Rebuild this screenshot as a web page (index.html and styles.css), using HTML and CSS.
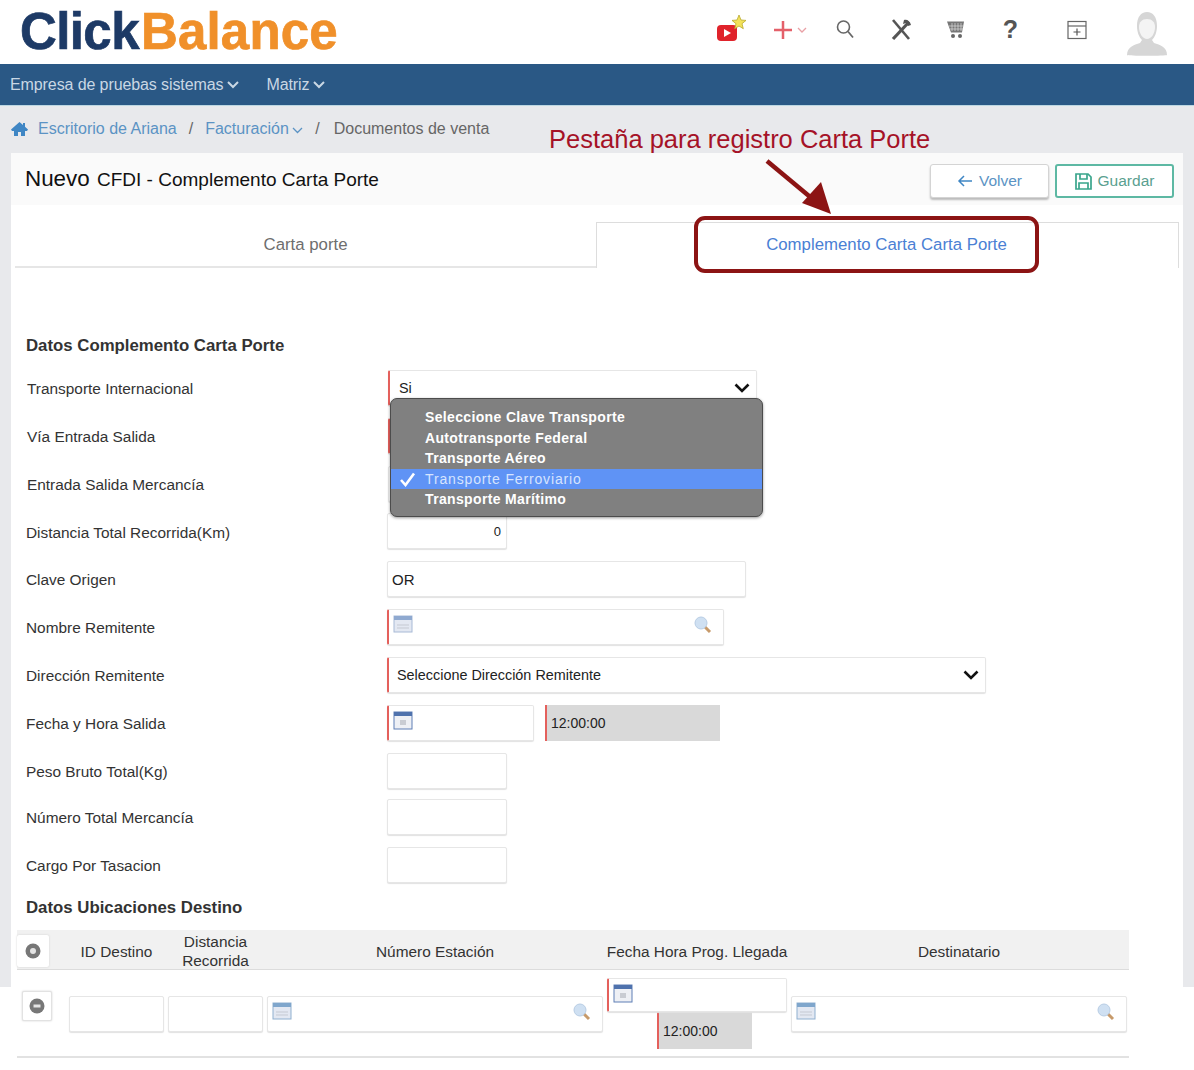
FILE: index.html
```html
<!DOCTYPE html>
<html lang="es">
<head>
    <meta charset="UTF-8">
    <meta name="viewport" content="width=device-width, initial-scale=1.0">
    <title>Complemento Carta Porte</title>
    <link rel="stylesheet" href="styles.css">
</head>
<body>
    <header class="topbar">
        <div class="logo"><span class="logo-click">Click</span><span class="logo-balance">Balance</span></div>
        <div class="top-icons">
            <svg class="ic-video" width="31" height="30" viewBox="0 0 31 30"><rect x="0" y="11" width="20" height="16" rx="4" fill="#e0232b"/><path d="M7 15l7 4-7 4z" fill="#fff"/><path d="M22 1l2 5 5 .4-4 3.300 1.300 5-4.300-2.700-4.300 2.700 1.300-5-4-3.300 5-.4z" fill="#f3e25a" stroke="#b9a92c" stroke-width=".8"/></svg>
            <svg class="ic-plus" width="36" height="20" viewBox="0 0 36 20"><path d="M10 1v18M1 10h18" stroke="#e4606a" stroke-width="2.500"/><path d="M25 8l4 4 4-4" fill="none" stroke="#e9a0a5" stroke-width="1.300"/></svg>
            <svg class="ic-search" width="20" height="20" viewBox="0 0 20 20"><circle cx="8.500" cy="8" r="6" fill="none" stroke="#666" stroke-width="1.600"/><path d="M13 12.500l5 6" stroke="#666" stroke-width="1.800"/></svg>
            <svg class="ic-tools" width="22" height="22" viewBox="0 0 22 22"><path d="M3 1l16 19" stroke="#555" stroke-width="2.600"/><path d="M19 3L3 20" stroke="#555" stroke-width="3.200"/><path d="M14 1c3-1 6 1 7 5l-3 1-2-3-3 1z" fill="#555"/></svg>
            <svg class="ic-cart" width="20" height="20" viewBox="0 0 20 20"><path d="M1 1.500h17l-2 11H5z" fill="#777"/><path d="M6 3v8M9 3v8M12 3v8M15 3v8M3 6h15M4 9h13" stroke="#ddd" stroke-width=".7"/><circle cx="7" cy="16" r="2" fill="#666"/><circle cx="14" cy="16" r="2" fill="#666"/></svg>
            <span class="ic-help">?</span>
            <svg class="ic-window" width="20" height="20" viewBox="0 0 20 20"><rect x="1" y="1.500" width="18" height="17" fill="#fff" stroke="#666" stroke-width="1.200"/><path d="M1 6h18" stroke="#666" stroke-width="1.200"/><path d="M10 8.500v7M6.500 12h7" stroke="#555" stroke-width="1.200"/></svg>
            <svg class="ic-user" width="40" height="46" viewBox="0 0 40 46"><path d="M0 44c0-8 7-10 13-12l2-3c-3-3-5-8-5-14C10 6 14 1 20 1s10 5 10 14c0 6-2 11-5 14l2 3c6 2 13 4 13 12 0 1-40 1-40 0z" fill="#d6d6d6"/><path d="M12 16c0-5 3-8 8-8s8 3 8 8c0 7-4 12-8 12s-8-5-8-12z" fill="#f4f4f4"/></svg>
        </div>
    </header>

    <nav class="navbar">
        <span class="nav-item">Empresa de pruebas sistemas <svg class="chev" width="12" height="8" viewBox="0 0 12 8"><path d="M1 1l5 5 5-5" fill="none" stroke="currentColor" stroke-width="2"/></svg></span>
        <span class="nav-item">Matriz <svg class="chev" width="12" height="8" viewBox="0 0 12 8"><path d="M1 1l5 5 5-5" fill="none" stroke="currentColor" stroke-width="2"/></svg></span>
    </nav>

    <main class="content">
        <div class="crumbs">
            <svg class="ic-home" width="17" height="14" viewBox="0 0 17 14"><path d="M8.500 0L0 7.500 1 9h2v5h4v-4h3v4h4V9h2l1-1.500-3-2.700V1h-2v2z" fill="#3f86c4"/></svg>
            <a class="crumb-link">Escritorio de Ariana</a>
            <span class="crumb-sep">/</span>
            <a class="crumb-link">Facturación <svg class="chev-small" width="11" height="7" viewBox="0 0 11 7"><path d="M1 1l4.500 4.500L10 1" fill="none" stroke="currentColor" stroke-width="1.300"/></svg></a>
            <span class="crumb-sep">/</span>
            <span class="crumb-current">Documentos de venta</span>
        </div>

        <section class="panel">
            <div class="title-bar">
                <h1 class="title"><span class="title-big">Nuevo</span> CFDI - Complemento Carta Porte</h1>
                <div class="actions">
                    <button class="btn btn-back"><svg width="16" height="12" viewBox="0 0 16 12"><path d="M7 1L2 6l5 5M2 6h13" fill="none" stroke="#3f86c4" stroke-width="1.500"/></svg>Volver</button>
                    <button class="btn btn-save"><svg width="17" height="17" viewBox="0 0 17 17"><path d="M1 1h12l3 3v12H1z" fill="none" stroke="#3aa58c" stroke-width="1.700"/><path d="M5 1v5h7V1M4 16v-6h9v6" fill="none" stroke="#3aa58c" stroke-width="1.700"/></svg>Guardar</button>
                </div>
            </div>

            <div class="tabs">
                <div class="tab">Carta porte</div>
                <div class="tab tab-active">Complemento Carta Carta Porte</div>
            </div>

            <h2 class="section-title section-first">Datos Complemento Carta Porte</h2>

            <div class="form">
                <div class="row row-select">
                    <label class="row-label">Transporte Internacional</label>
                    <div class="field field-req w370 select-field">Si <svg class="sel-arrow" width="16" height="10" viewBox="0 0 16 10"><path d="M1.500 1.500L8 8l6.500-6.500" fill="none" stroke="#111" stroke-width="2.600"/></svg></div>
                    <ul class="menu">
                        <li>Seleccione Clave Transporte</li>
                        <li>Autotransporte Federal</li>
                        <li>Transporte Aéreo</li>
                        <li class="menu-on"><svg class="menu-check" width="17" height="15" viewBox="0 0 17 15"><path d="M2 8l4.500 5L15 1.500" fill="none" stroke="#fff" stroke-width="2.600"/></svg>Transporte Ferroviario</li>
                        <li>Transporte Marítimo</li>
                    </ul>
                </div>
                <div class="row row-select">
                    <label class="row-label">Vía Entrada Salida</label>
                    <div class="field field-req w370"></div>
                </div>
                <div class="row row-select">
                    <label class="row-label">Entrada Salida Mercancía</label>
                    <div class="field w370"></div>
                </div>
                <div class="row row-after-select">
                    <label class="row-label">Distancia Total Recorrida(Km)</label>
                    <div class="field w120 field-num">0</div>
                </div>
                <div class="row">
                    <label class="row-label">Clave Origen</label>
                    <div class="field w359">OR</div>
                </div>
                <div class="row">
                    <label class="row-label">Nombre Remitente</label>
                    <div class="field field-req w337 lookup">
                        <svg class="cal" width="20" height="18" viewBox="0 0 20 18"><rect x="1" y="1" width="18" height="16" fill="#e3e8f2" stroke="#a8bad6"/><rect x="1" y="1" width="18" height="4" fill="#8fa9d0"/><path d="M4 10h12M4 13h12" stroke="#c5c9d2"/></svg>
                        <svg class="lens" width="20" height="20" viewBox="0 0 20 20"><path d="M11 11l6 6" stroke="#c79a6a" stroke-width="3"/><circle cx="8" cy="8" r="6" fill="#cfe0f2" stroke="#b8cde4"/></svg>
                    </div>
                </div>
                <div class="row">
                    <label class="row-label">Dirección Remitente</label>
                    <div class="field field-req w599 select-field sel-pad">Seleccione Dirección Remitente <svg class="sel-arrow" width="16" height="10" viewBox="0 0 16 10"><path d="M1.500 1.500L8 8l6.500-6.500" fill="none" stroke="#111" stroke-width="2.600"/></svg></div>
                </div>
                <div class="row">
                    <label class="row-label">Fecha y Hora Salida</label>
                    <div class="field field-req w147">
                        <svg class="cal" width="20" height="19" viewBox="0 0 20 19"><rect x="1" y="1" width="18" height="17" fill="#eef0f5" stroke="#5f7fb5"/><rect x="1" y="1" width="18" height="4" fill="#4f72ad"/><rect x="7" y="9" width="6" height="5" fill="#c9ccd3"/></svg>
                    </div>
                    <div class="field-time w175">12:00:00</div>
                </div>
                <div class="row">
                    <label class="row-label">Peso Bruto Total(Kg)</label>
                    <div class="field w120"></div>
                </div>
                <div class="row row-short">
                    <label class="row-label">Número Total Mercancía</label>
                    <div class="field w120"></div>
                </div>
                <div class="row">
                    <label class="row-label">Cargo Por Tasacion</label>
                    <div class="field w120"></div>
                </div>
            </div>

            <h2 class="section-title section-second">Datos Ubicaciones Destino</h2>

            <div class="grid-table">
                <div class="grid-head">
                    <div class="cell-btn"><span class="round-btn"><svg width="16" height="16" viewBox="0 0 16 16"><circle cx="8" cy="8" r="7.500" fill="#777"/><circle cx="8" cy="8" r="3" fill="#e4e4e4"/></svg></span></div>
                    <div>ID Destino</div>
                    <div>Distancia Recorrida</div>
                    <div>Número Estación</div>
                    <div>Fecha Hora Prog. Llegada</div>
                    <div>Destinatario</div>
                </div>
                <div class="grid-row">
                    <div class="cell-btn"><span class="round-btn round-minus"><svg width="16" height="16" viewBox="0 0 16 16"><circle cx="8" cy="8" r="7.500" fill="#777"/><rect x="4.500" y="6.500" width="7" height="3" fill="#e4e4e4"/></svg></span></div>
                    <div class="cell-plain"><div class="field"></div></div>
                    <div class="cell-plain"><div class="field"></div></div>
                    <div class="cell-plain"><div class="field lookup">
                        <svg class="cal" width="20" height="18" viewBox="0 0 20 18"><rect x="1" y="1" width="18" height="16" fill="#e3e8f2" stroke="#8fb0d0"/><rect x="1" y="1" width="18" height="4" fill="#7fa6cc"/><path d="M4 10h12M4 13h12" stroke="#c5c9d2"/></svg>
                        <svg class="lens" width="20" height="20" viewBox="0 0 20 20"><path d="M11 11l6 6" stroke="#c79a6a" stroke-width="3"/><circle cx="8" cy="8" r="6" fill="#cfe0f2" stroke="#b8cde4"/></svg>
                    </div></div>
                    <div class="cell-date">
                        <div class="field field-req field-date">
                            <svg class="cal" width="20" height="19" viewBox="0 0 20 19"><rect x="1" y="1" width="18" height="17" fill="#eef0f5" stroke="#5f7fb5"/><rect x="1" y="1" width="18" height="4" fill="#4f72ad"/><rect x="7" y="9" width="6" height="5" fill="#c9ccd3"/></svg>
                        </div>
                        <div class="field-time time-small">12:00:00</div>
                    </div>
                    <div class="cell-plain"><div class="field lookup">
                        <svg class="cal" width="20" height="18" viewBox="0 0 20 18"><rect x="1" y="1" width="18" height="16" fill="#e3e8f2" stroke="#8fb0d0"/><rect x="1" y="1" width="18" height="4" fill="#7fa6cc"/><path d="M4 10h12M4 13h12" stroke="#c5c9d2"/></svg>
                        <svg class="lens" width="20" height="20" viewBox="0 0 20 20"><path d="M11 11l6 6" stroke="#c79a6a" stroke-width="3"/><circle cx="8" cy="8" r="6" fill="#cfe0f2" stroke="#b8cde4"/></svg>
                    </div></div>
                </div>
            </div>
        </section>
    </main>

    <!-- anotaciones sobre la captura -->
    <div class="note-text">Pestaña para registro Carta Porte</div>
    <svg class="note-arrow" width="70" height="58" viewBox="0 0 70 58"><path d="M2 2l54 45" stroke="#8c1414" stroke-width="4.500"/><path d="M66 55L37 44l19-21z" fill="#8c1414"/></svg>
    <div class="note-box"></div>
</body>
</html>
```

FILE: styles.css
```css
*{
    box-sizing: border-box;
}
body{
    margin: 0;
    height: 1070px;
    overflow: hidden;
    background: #fff;
    font-family: "Liberation Sans", Arial, sans-serif;
    font-size: 14px;
    color: #333;
    position: relative;
}

/* top bar */
.topbar{
    height: 64px;
    display: flex;
    justify-content: space-between;
    align-items: center;
    padding-left: 20px;
}
.logo{
    font-size: 51px;
    font-weight: bold;
    letter-spacing: -.6px;
    line-height: 1;
    margin-top: -2px;
    -webkit-text-stroke: .7px;
}
.logo-click{
    color: #1d3a66;
    margin-right: 2px;
}
.logo-balance{
    color: #f0902a;
    letter-spacing: .2px;
}
.top-icons{
    display: flex;
    align-items: center;
    height: 64px;
    padding-right: 27px;
}
.ic-video{
    margin-right: 25px;
    margin-top: -6px;
}
.ic-plus{
    margin-right: 26px;
    margin-top: -4px;
}
.ic-search{
    margin-right: 35px;
    margin-top: -6px;
}
.ic-tools{
    margin-right: 34px;
    margin-top: -4px;
}
.ic-cart{
    margin-right: 37px;
    margin-top: -4px;
}
.ic-help{
    font-size: 25px;
    font-weight: bold;
    color: #555;
    margin-right: 49px;
    margin-top: -6px;
}
.ic-window{
    margin-right: 40px;
    margin-top: -4px;
}
.ic-user{
    margin-top: 4px;
    margin-bottom: 0;
}

/* nav */
.navbar{
    height: 42px;
    background: #2a5885;
    border-bottom: 1px solid #bcd7e2;
    color: #c9d7e4;
    display: flex;
    align-items: center;
    gap: 27px;
    padding-left: 10px;
    font-size: 16px;
}
.nav-item{
    display: flex;
    align-items: center;
    gap: 4px;
    letter-spacing: -.1px;
}

/* contenido */
.content{
    height: 881px;
    background: #e8e9ec;
    padding: 0 11px;
}
.crumbs{
    height: 47px;
    display: flex;
    align-items: center;
    gap: 12px;
    padding-bottom: 2px;
    font-size: 16px;
    color: #666;
}
.ic-home{
    margin-right: -2px;
}
.crumb-link{
    color: #5b93c4;
}
.crumb-current{
    color: #666;
    margin-left: 2px;
}
.chev-small{
    margin-left: -1px;
}
.panel{
    width: 1172px;
    height: 917px;
    background: #fff;
}
.title-bar{
    height: 52px;
    background: #fafafa;
    display: flex;
    justify-content: space-between;
    align-items: center;
    padding: 0 9px 0 14px;
}
.title{
    margin: 0;
    font-size: 19px;
    font-weight: normal;
    color: #111;
}
.title-big{
    font-size: 22.400px;
    margin-right: 2px;
}
.actions{
    display: flex;
    gap: 6px;
    margin-top: 4px;
}
.btn{
    height: 34px;
    width: 119px;
    display: flex;
    justify-content: center;
    align-items: center;
    gap: 6px;
    background: #fff;
    border-radius: 3px;
    font-family: inherit;
    font-size: 15.500px;
    padding: 0;
}
.btn-back{
    border: 1px solid #d4d4d4;
    box-shadow: 0 2px 2px #bbb;
    color: #5b93c4;
}
.btn-save{
    border: 2px solid #5db8a3;
    color: #5a9f90;
    width: 119px;
}
.tabs{
    display: flex;
    height: 46px;
    margin: 17px 4px 0;
    text-align: center;
    font-size: 16.800px;
    line-height: 46px;
    color: #6e6e6e;
}
.tab{
    width: 581px;
    border-bottom: 2px solid #e6e6e6;
}
.tab-active{
    width: 583px;
    border: 1px solid #ddd;
    border-bottom: 0;
    color: #4a80d4;
    line-height: 44px;
    padding-right: 2px;
}
.section-title{
    margin: 0 0 0 15px;
    font-size: 16.800px;
    font-weight: bold;
    color: #333;
    line-height: 20px;
}
.section-first{
    padding-top: 68px;
    height: 87px;
}

/* formulario */
.form{
    padding: 0 0 0 15px;
    margin-top: 15px;
}
.row{
    display: flex;
    align-items: center;
    gap: 11px;
    height: 36px;
    margin-bottom: 12px;
    position: relative;
}
.row-short{
    margin-top: -2px;
}
.row-select{
    padding-left: 1px;
}
.row-after-select{
    margin-top: -1px;
}
.row-label{
    width: 350px;
    flex: none;
    padding-top: 1px;
    font-size: 15.400px;
}
.row-after-select .row-label{
    padding-top: 3px;
}
.field{
    height: 36px;
    border: 1px solid #e6e6e6;
    border-radius: 2px;
    background: #fff;
    display: flex;
    align-items: center;
    padding: 0 4px;
    font-size: 15px;
    color: #222;
    position: relative;
    box-shadow: 0 1px 1px #e2e2e2;
}
.field-req{
    border-left: 2px solid #e4605c;
}
.w120{ width: 120px; }
.w147{ width: 147px; }
.w175{ width: 175px; }
.w337{ width: 337px; }
.w359{ width: 359px; }
.w370{ width: 369px; }
.w599{ width: 599px; }
.field-num{
    justify-content: flex-end;
    padding-right: 5px;
    font-size: 13px;
}
.select-field{
    padding-left: 9px;
    font-size: 14.400px;
}
.sel-pad{
    padding-left: 8px;
}
.sel-arrow{
    position: absolute;
    right: 6px;
    top: 12px;
}
.field-time{
    height: 36px;
    background: #d9d9d9;
    border-left: 2px solid #e4605c;
    display: flex;
    align-items: center;
    padding-left: 4px;
    margin-left: 0;
    font-size: 14px;
    color: #222;
}
.cal{
    position: absolute;
    left: 4px;
    top: 5px;
}
.lens{
    position: absolute;
    right: 10px;
    top: 5px;
}

/* menu del select */
.menu{
    position: absolute;
    left: 364px;
    top: 28px;
    z-index: 5;
    width: 373px;
    height: 119px;
    margin: 0;
    padding: 8px 0 0;
    list-style: none;
    background: #808080;
    border: 1px solid #4c4c4c;
    border-radius: 7px;
    box-shadow: 0 1px 3px rgba(0,0,0,.4);
    color: #fff;
    font-size: 14px;
    font-weight: bold;
    letter-spacing: .35px;
}
.menu li{
    height: 20.600px;
    line-height: 20px;
    padding-left: 34px;
    position: relative;
}
.menu .menu-on{
    background: #5f93f5;
    color: #d6e4ff;
    font-weight: normal;
    letter-spacing: .85px;
}
.menu-check{
    position: absolute;
    left: 8px;
    top: 3px;
}

/* tabla destinos */
.section-second{
    margin-top: 15px;
}
.grid-table{
    margin: 12px 0 0 6px;
    width: 1112px;
}
.grid-head,
.grid-row{
    display: grid;
    grid-template-columns: 50px 99px 99px 340px 184px 340px;
}
.grid-head{
    height: 40px;
    padding-top: 2px;
    background: #f1f1f1;
    border-bottom: 1px solid #dcdcdc;
    align-items: center;
    text-align: center;
    font-size: 15.400px;
    line-height: 19px;
    color: #333;
}
.grid-head > div:nth-child(3){
    padding: 0 16px;
}
.cell-btn{
    text-align: left;
}
.round-btn{
    display: flex;
    align-items: center;
    justify-content: center;
    width: 32px;
    height: 32px;
    background: #fff;
    border-radius: 2px;
    box-shadow: 0 0 2px #ccc;
}
.round-minus{
    width: 30px;
    height: 30px;
    margin: 21px 0 0 5px;
    border: 1px solid #e2e2e2;
}
.grid-row{
    height: 88px;
    border-bottom: 2px solid #e2e2e2;
}
.cell-plain{
    padding: 26px 2px 0;
}
.cell-date{
    padding: 8px 2px 0;
}
.field-date{
    height: 34px;
}
.time-small{
    width: 95px;
    height: 37px;
    margin-left: 50px;
}

/* anotaciones */
.note-text{
    position: absolute;
    left: 549px;
    top: 125px;
    font-size: 25.500px;
    color: #a51227;
    white-space: nowrap;
}
.note-arrow{
    position: absolute;
    left: 765px;
    top: 159px;
}
.note-box{
    position: absolute;
    left: 694px;
    top: 216px;
    width: 345px;
    height: 57px;
    border: 4px solid #8c1414;
    border-radius: 11px;
}
```
